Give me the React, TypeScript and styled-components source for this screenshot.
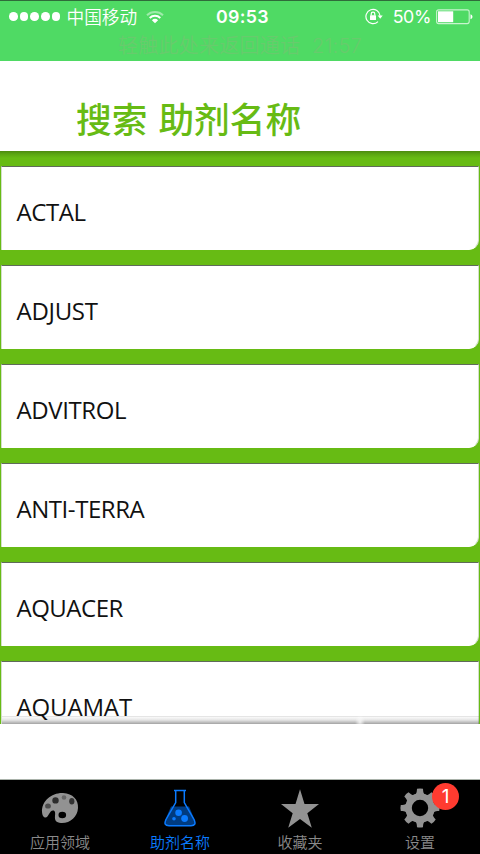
import React from "react";
import styled, { createGlobalStyle } from "styled-components";

const GlobalStyle = createGlobalStyle`
  * { box-sizing: border-box; }
  body { margin: 0; background: #fff; }
`;

const cjk = `"Noto Sans CJK SC", sans-serif`;

const Screen = styled.div`
  width: 480px;
  height: 854px;
  display: flex;
  flex-direction: column;
  overflow: hidden;
  background: #fff;
  font-family: "Open Sans", ${cjk};
`;

const StatusBar = styled.header`
  height: 61px;
  flex: none;
  border-top: 1px solid #2f6b3a;
  background: #4fda64;
  color: #fff;
`;

const StatusRow = styled.div`
  height: 31px;
  display: grid;
  grid-template-columns: 1fr 56px 1fr;
  align-items: center;
  padding: 0 7px 0 9px;
`;

const StatusGroup = styled.div<{ $end?: boolean }>`
  display: flex;
  align-items: center;
  justify-content: ${(p) => (p.$end ? "flex-end" : "flex-start")};
`;

const Signal = styled.div`
  display: flex;
  gap: 2px;
  margin-right: 6px;
`;

const Dot = styled.i`
  width: 8.7px;
  height: 8.7px;
  border-radius: 50%;
  background: #fff;
`;

const Carrier = styled.span`
  height: 30px;
  font: 350 17.7px/28px ${cjk};
  margin-right: 9px;
`;

const Clock = styled.time`
  padding-left: 3px;
  font: 600 17.8px/30px Inter, sans-serif;
  letter-spacing: 0.35px;
  text-align: center;
  white-space: nowrap;
`;

const Percent = styled.span`
  font: 400 17.8px/30px Inter, sans-serif;
  letter-spacing: -0.4px;
  margin: 0 5px 0 10px;
`;

const CallHint = styled.div`
  text-align: center;
  font: 350 20px/28px Inter, ${cjk};
  letter-spacing: 0.25px;
  white-space: pre;
  color: #67cb6d;
`;

const TitleBar = styled.div`
  height: 90px;
  flex: none;
  padding: 32px 0 0 76px;
`;

const Title = styled.h1`
  margin: 0;
  font: 500 35.7px/50px ${cjk};
  word-spacing: 3px;
  color: #67bb14;
  white-space: pre;
`;

const List = styled.main`
  position: relative;
  height: 573px;
  flex: none;
  overflow: hidden;
  display: flex;
  flex-direction: column;
  gap: 15px;
  padding: 14.6px 1px 0;
  background: linear-gradient(#4c8a10, #5aa512 3px, #67bb14 7px);
`;

const Card = styled.div`
  height: 84px;
  flex: none;
  display: flex;
  align-items: center;
  padding: 9px 0 0 14.5px;
  background: #fff;
  border: 1px solid #d3dfca;
  border-top: 1px solid #5f6b5a;
  border-bottom-color: #fff;
  border-bottom-right-radius: 10px;
`;

const Name = styled.span<{ $tracking: number }>`
  font: 400 24px/34px "Open Sans", sans-serif;
  letter-spacing: ${(p) => p.$tracking}px;
  color: #111;
`;

const ListShade = styled.div`
  position: absolute;
  inset: auto 1px 0 2px;
  height: 8px;
  background:
    radial-gradient(ellipse 5px 7px at 358px 6px, rgba(255, 255, 255, 0.75), transparent),
    linear-gradient(rgba(0, 0, 0, 0.1) 1px, rgba(0, 0, 0, 0.02) 1px, rgba(0, 0, 0, 0.1) 50%, rgba(0, 0, 0, 0.36));
`;

const Spacer = styled.div`
  height: 55px;
  flex: none;
`;

const TabBar = styled.nav`
  height: 75px;
  flex: none;
  display: grid;
  grid-template-columns: repeat(4, 1fr);
  background: #000;
  border-top: 1px solid #a9b2aa;
`;

const Tab = styled.div<{ $active?: boolean }>`
  display: flex;
  flex-direction: column;
  align-items: center;
  padding-top: 8px;
  color: ${(p) => (p.$active ? "#0a7bff" : "#8a8a8a")};
`;

const TabIcon = styled.div`
  position: relative;
  height: 40px;

  svg { display: block; }
`;

const TabLabel = styled.span`
  margin-top: 2px;
  font: 350 15px/24px ${cjk};
`;

const Badge = styled.span`
  position: absolute;
  left: 32px;
  top: -5px;
  width: 27px;
  height: 27px;
  border-radius: 50%;
  background: #ff3b30;
  color: #fff;
  font: 400 19px/27px Inter, sans-serif;
  text-align: center;
`;

const Wifi = () => (
  <svg width="18" height="14" viewBox="0 0 18 14" fill="none" stroke="#fff" strokeWidth="2">
    <path d="M1 5.2a11.6 11.6 0 0 1 16 0" opacity="0.45" />
    <path d="M3.7 8a7.6 7.6 0 0 1 10.6 0" />
    <path d="M9 13.2 5.900 10.200a4.600 4.600 0 0 1 6.200 0z" fill="#fff" stroke="none" />
  </svg>
);

const RotationLock = () => (
  <svg width="18" height="17" viewBox="0 0 18 17" fill="none" stroke="#fff" strokeWidth="1.2">
    <path d="M13 13.6A7.1 7.1 0 1 1 15.1 7.8" />
    <path d="M12.7 7.5h5l-2.5 3.2z" fill="#fff" stroke="none" />
    <rect x="5" y="7.3" width="6" height="4.8" rx=".5" fill="#fff" stroke="none" />
    <path d="M6.2 7.5V6a1.8 1.8 0 0 1 3.6 0v1.5" />
  </svg>
);

const Battery = () => (
  <svg width="37" height="16" viewBox="0 0 37 16">
    <rect x=".6" y=".9" width="32.6" height="13.7" rx="2" fill="none" stroke="#c8f4ce" strokeWidth="1.1" />
    <rect x="2" y="2.3" width="15.2" height="10.9" fill="#fff" />
    <path d="M34.5 5.2c2.6.7 2.6 4.3 0 5z" fill="#fff" />
  </svg>
);

const Palette = () => (
  <svg width="38" height="40" viewBox="0 0 38 40">
    <path
      d="M1 24C.4 13 11 4.500 22 5c10 .4 15.500 7 15 15-.5 9-8 15.500-17 15-5-.3-6.500-3-6-7 .4-3 .3-5.500-2-5.500-3.500 0-4.500 7-7.500 7-2.200 0-3.200-2.500-3.500-5.500z"
      fill="#929292"
    />
    <ellipse cx="21.300" cy="27" rx="3.800" ry="3.200" fill="#000" />
    <circle cx="14.500" cy="12.400" r="3.200" fill="#2c2c2c" />
    <circle cx="23" cy="9.500" r="2.300" fill="#666" />
    <ellipse cx="30.800" cy="13.200" rx="2.600" ry="3.200" fill="#333" />
    <ellipse cx="7" cy="18" rx="2.900" ry="2.600" fill="#4c4c4c" />
  </svg>
);

const Flask = () => (
  <svg width="32" height="40" viewBox="0 0 32 40">
    <path d="M7 18.500h18l6 14q1 5-4 5H5q-5 0-4-5z" fill="#003b80" />
    <path d="M10 2.500h12M11.700 2.500v12L2 31.500Q-1 37.700 5 37.700h22q6 0 3-6.200L20.300 14.500v-12" fill="none" stroke="#0a7bff" strokeWidth="1.500" />
    <circle cx="14.600" cy="24.700" r="3.300" fill="#0a7bff" />
    <circle cx="20.600" cy="30.500" r="3.400" fill="#0a7bff" />
    <circle cx="10" cy="30.700" r="1.800" fill="#0a7bff" />
  </svg>
);

const Star = () => (
  <svg width="38" height="40" viewBox="0 0 38 40">
    <path d="M19 1.200 23.500 16H38L26.300 25.200 30.800 39.700 19 30.900 7.200 39.700 11.700 25.200 0 16H14.500z" fill="#929292" />
  </svg>
);

const Gear = () => (
  <svg width="40" height="40" viewBox="-20 -20 40 40">
    <g fill="#929292">
      {[0, 45, 90, 135, 180, 225, 270, 315].map((a) => (
        <path key={a} d="M-5-13C-3-15-3.200-17-3-19.200Q0-20 3-19.200C3.200-17 3-15 5-13z" transform={`rotate(${a})`} />
      ))}
    </g>
    <circle r="11.500" fill="none" stroke="#929292" strokeWidth="6.600" />
  </svg>
);

const names: [string, number][] = [
  ["ACTAL", -0.4],
  ["ADJUST", -0.3],
  ["ADVITROL", -0.4],
  ["ANTI-TERRA", -0.45],
  ["AQUACER", -0.5],
  ["AQUAMAT", -0.15],
];

const tabs = [
  { label: "应用领域", icon: <Palette /> },
  { label: "助剂名称", icon: <Flask />, active: true },
  { label: "收藏夹", icon: <Star /> },
  { label: "设置", icon: <Gear />, badge: 1 },
];

export default function App() {
  return (
    <Screen>
      <GlobalStyle />
      <StatusBar>
        <StatusRow>
          <StatusGroup>
            <Signal>{[0, 1, 2, 3, 4].map((i) => <Dot key={i} />)}</Signal>
            <Carrier>中国移动</Carrier>
            <Wifi />
          </StatusGroup>
          <Clock>09:53</Clock>
          <StatusGroup $end>
            <RotationLock />
            <Percent>50%</Percent>
            <Battery />
          </StatusGroup>
        </StatusRow>
        <CallHint>轻触此处来返回通话  21:57</CallHint>
      </StatusBar>
      <TitleBar>
        <Title>搜索 助剂名称</Title>
      </TitleBar>
      <List>
        {names.map(([name, tracking]) => (
          <Card key={name}>
            <Name $tracking={tracking}>{name}</Name>
          </Card>
        ))}
        <ListShade />
      </List>
      <Spacer />
      <TabBar>
        {tabs.map((t) => (
          <Tab key={t.label} $active={t.active}>
            <TabIcon>
              {t.icon}
              {t.badge && <Badge>{t.badge}</Badge>}
            </TabIcon>
            <TabLabel>{t.label}</TabLabel>
          </Tab>
        ))}
      </TabBar>
    </Screen>
  );
}
